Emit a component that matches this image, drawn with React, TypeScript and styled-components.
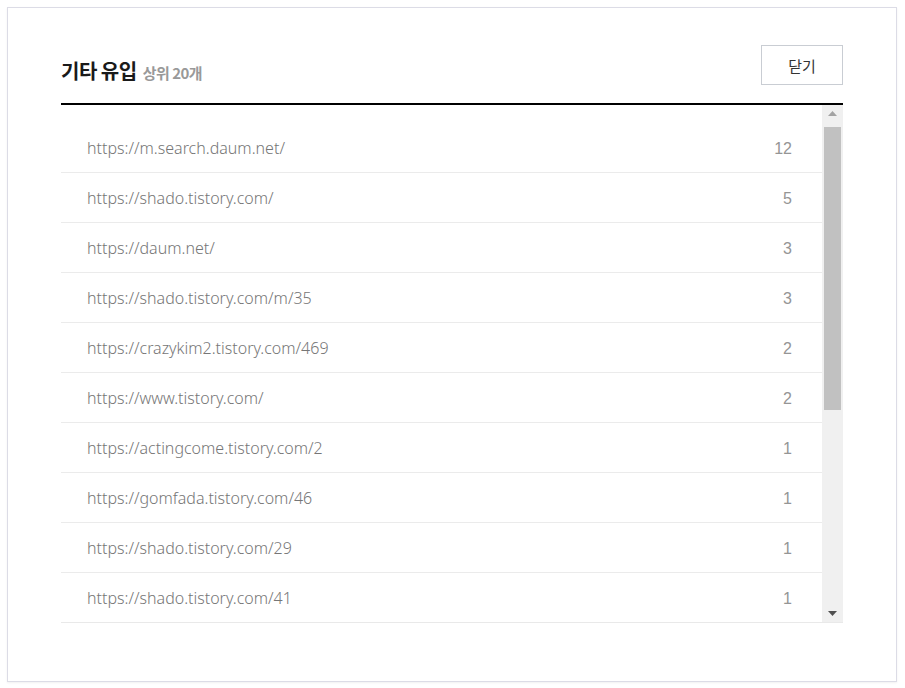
import React from "react";
import styled, { createGlobalStyle } from "styled-components";

const GlobalStyle = createGlobalStyle`
  html, body {
    margin: 0;
    padding: 0;
    background: #fff;
  }
  body {
    font-family: "Noto Sans", "Noto Sans CJK KR", sans-serif;
  }
`;

const Page = styled.div`
  width: 905px;
  height: 688px;
  padding: 7px 0 0 7px;
  box-sizing: border-box;
  overflow: hidden;
`;

const Modal = styled.div`
  width: 890px;
  height: 675px;
  box-sizing: border-box;
  border: 1px solid #dcdce6;
  box-shadow: 0 1px 2px rgba(0, 0, 0, 0.06);
  background: #fff;
  padding: 37px 53px 0 53px;
`;

const Header = styled.div`
  display: flex;
  justify-content: space-between;
  align-items: flex-start;
  height: 58px;
  border-bottom: 2px solid #000;
`;

const Title = styled.h2`
  margin: 12px 0 0;
  height: 28px;
  font-family: "Noto Sans CJK KR", sans-serif;
  font-size: 20px;
  line-height: 28px;
  font-weight: 700;
  color: #1a1a1a;
  letter-spacing: -0.5px;
  white-space: nowrap;
`;

const Sub = styled.span`
  margin-left: 6px;
  font-size: 15px;
  font-weight: 700;
  color: #999;
  letter-spacing: -0.5px;
`;

const CloseButton = styled.button`
  width: 82px;
  height: 40px;
  padding: 0;
  border: 1px solid #c9cdd3;
  background: #fff;
  font-family: "Noto Sans CJK KR", sans-serif;
  font-size: 15px;
  color: #333;
  cursor: pointer;
`;

const ListWrap = styled.div`
  display: flex;
  height: 517px;
  border-bottom: 1px solid #e9e9e9;
`;

const Rows = styled.ul`
  flex: 1;
  margin: 0;
  padding: 18px 0 0;
  list-style: none;
  overflow: hidden;
`;

const Row = styled.li`
  display: flex;
  align-items: center;
  justify-content: space-between;
  height: 49px;
  padding: 0 30px 0 26px;
  border-bottom: 1px solid #ebebeb;
  font-size: 16px;
  color: #767676;
`;

const Url = styled.span`
  font-weight: 300;
`;

const Count = styled.span`
  font-family: "Liberation Sans", sans-serif;
  font-size: 16px;
  color: #959595;
  padding-top: 2px;
`;

const ScrollBar = styled.div`
  width: 21px;
  display: flex;
  flex-direction: column;
  background: #f0f0f0;
`;

const Arrow = styled.div`
  height: 17px;
  display: flex;
  align-items: center;
  justify-content: center;
`;

const Track = styled.div`
  flex: 1;
  padding: 5px 2px 0;
`;

const Thumb = styled.div`
  background: #c1c1c1;
`;

const items: [string, number][] = [
  ["https://m.search.daum.net/", 12],
  ["https://shado.tistory.com/", 5],
  ["https://daum.net/", 3],
  ["https://shado.tistory.com/m/35", 3],
  ["https://crazykim2.tistory.com/469", 2],
  ["https://www.tistory.com/", 2],
  ["https://actingcome.tistory.com/2", 1],
  ["https://gomfada.tistory.com/46", 1],
  ["https://shado.tistory.com/29", 1],
  ["https://shado.tistory.com/41", 1],
];

export default function App() {
  return (
    <Page>
      <GlobalStyle />
      <Modal>
        <Header>
          <Title>
            기타 유입<Sub>상위 20개</Sub>
          </Title>
          <CloseButton>닫기</CloseButton>
        </Header>
        <ListWrap>
          <Rows>
            {items.map(([url, n]) => (
              <Row key={url}>
                <Url>{url}</Url>
                <Count>{n}</Count>
              </Row>
            ))}
          </Rows>
          <ScrollBar>
            <Arrow>
              <svg width="9" height="5" viewBox="0 0 9 5">
                <path d="M0 5 L4.5 0 L9 5 Z" fill="#a3a3a3" />
              </svg>
            </Arrow>
            <Track>
              <Thumb style={{ height: 283 }} />
            </Track>
            <Arrow>
              <svg width="9" height="5" viewBox="0 0 9 5">
                <path d="M0 0 L4.5 5 L9 0 Z" fill="#505050" />
              </svg>
            </Arrow>
          </ScrollBar>
        </ListWrap>
      </Modal>
    </Page>
  );
}
